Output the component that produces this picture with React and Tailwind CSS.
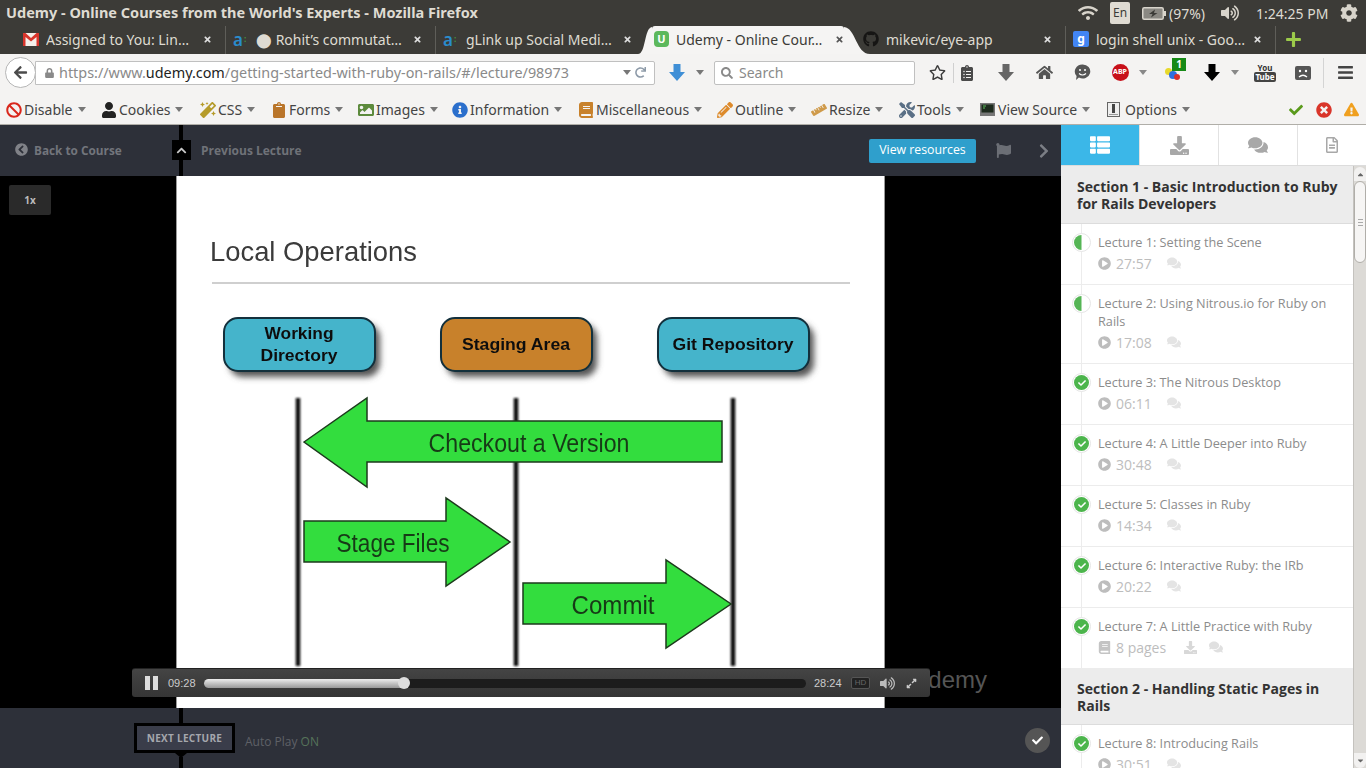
import React from "react";
import {
  FaThList, FaDownload, FaComments, FaRegFileAlt, FaPlayCircle, FaBook, FaFlag, FaChevronRight, FaChevronUp,
  FaChevronCircleLeft, FaGithub, FaVolumeUp, FaExpandAlt, FaCheck, FaWifi, FaCog, FaSearch, FaLock, FaArrowLeft,
  FaRedo, FaHome, FaBars, FaRegStar, FaPencilAlt, FaRuler, FaTools, FaInfoCircle, FaBan, FaUser, FaMagic,
  FaClipboard, FaImage, FaTimesCircle, FaExclamationTriangle, FaTimes, FaPlus, FaClipboardList, FaCaretDown, FaCaretUp
} from "react-icons/fa";

const Caret = ({ c = "text-[#777]" }) => <span className={`inline-block w-0 h-0 border-l-[4px] border-r-[4px] border-t-[5px] border-l-transparent border-r-transparent border-t-current ${c}`} />;

const BlockArrow = ({ fill, w = 16, h = 17 }) => (
  <svg width={w} height={h} viewBox="0 0 16 17"><path d="M4.5 0h7v8H16l-8 9-8-9h4.5z" fill={fill} /></svg>
);

function Tab({ icon, text, active, sep = true }) {
  if (active) {
    return (
      <div className="w-[226px] -ml-[8px] -mr-[8px] h-full flex items-stretch">
        <svg width="14" height="28" viewBox="0 0 14 28" className="shrink-0"><path d="M0 28C8 28 6 2 14 1V28Z" fill="#f5f4f3" /></svg>
        <div className="flex-1 bg-[#f5f4f3] rounded-t-[3px] flex items-center pl-[2px] pb-[2px] text-[#3c3b37]">
          <span className="w-[22px] shrink-0 flex">{icon}</span>
          <span className="w-[158px] whitespace-nowrap overflow-hidden">{text}</span>
          <FaTimes className="text-[9px] text-[#555] ml-[1px]" />
        </div>
        <svg width="26" height="28" viewBox="0 0 26 28" className="shrink-0"><path d="M0 1C12 2 12 28 26 28H0Z" fill="#f5f4f3" /></svg>
      </div>
    );
  }
  return (
    <div className={`w-[210px] h-full flex items-center pl-[7px] pb-[2px] text-[#dfdbd2] ${sep ? "border-r border-[#5f5e59]" : ""}`}>
      <span className="w-[23px] shrink-0 flex justify-start">{icon}</span>
      <span className="w-[156px] whitespace-nowrap overflow-hidden">{text}</span>
      <FaTimes className="text-[9px] text-[#ddd] shrink-0 ml-[1px]" />
    </div>
  );
}

const AIcon = () => (
  <span className="flex items-center font-['Noto_Sans'] text-[17px] leading-none text-[#2a8ccc] font-semibold">a<span className="text-[8px] text-[#48a23f] ml-[1px]">:</span></span>
);

function DevItem({ w, icon, label }) {
  return (
    <div style={{ width: w }} className="flex items-center shrink-0">
      <span className="w-[18px] shrink-0 flex justify-start text-[16px]">{icon}</span>
      <span className="whitespace-nowrap">{label}</span>
      <span className="ml-[5px] flex"><Caret /></span>
    </div>
  );
}

function Row({ title, meta, kind = "done", extra, border = true }) {
  return (
    <div className={`flex ${border ? "border-b border-[#ececec]" : ""}`}>
      <div className="w-[21px] shrink-0 border-r border-[#ececec]">
        <div className="ml-[11px] mt-[9px] w-[19px] h-[19px] rounded-full bg-white border border-[#e6e6e6] flex items-center justify-center">
          {kind === "half" ? (
            <svg width="15" height="15" viewBox="0 0 15 15"><path d="M7.5 0A7.5 7.5 0 0 0 7.5 15Z" fill="#55b555" /></svg>
          ) : (
            <span className="w-[15px] h-[15px] rounded-full bg-[#4cb54c] flex items-center justify-center"><FaCheck className="text-[8px] text-white" /></span>
          )}
        </div>
      </div>
      <div className="pl-[16px] pt-[9px] pb-[11px] flex-1 min-w-0">
        <div className="text-[12.7px] leading-[18px] text-[#8c8c8c] w-[240px]">{title}</div>
        <div className="mt-[2px] h-[20px] flex items-center text-[14px] text-[#bdbdbd]">
          {extra ? (
            <>
              <FaBook className="text-[13px] mr-[5px] text-[#c4c4c4]" />
              <span className="w-[68px]">{meta}</span>
              <FaDownload className="text-[13px] text-[#d8d8d8] mr-[12px]" />
              <FaComments className="text-[14px] text-[#e0e0e0]" />
            </>
          ) : (
            <>
              <FaPlayCircle className="text-[13px] mr-[5px] text-[#bdbdbd]" />
              <span className="w-[51px]">{meta}</span>
              <FaComments className="text-[14px] text-[#e4e4e4]" />
            </>
          )}
        </div>
      </div>
    </div>
  );
}

const Section = ({ children, tight }) => (
  <div className={`bg-[#ececec] border-b border-[#dcdcdc] pl-[16px] pr-[8px] text-[14px] leading-[17px] font-bold text-[#333] ${tight ? "pt-[11px] pb-[10px]" : "pt-[12px] pb-[11px]"}`}>{children}</div>
);

function Slide() {
  const box = "#45b4cb";
  return (
    <svg viewBox="176 176 709 532" width="709" height="532" className="block" fontFamily="'Liberation Sans', sans-serif">
      <defs>
        <filter id="b1" x="-20%" y="-20%" width="140%" height="140%"><feGaussianBlur stdDeviation="3" /></filter>
        <filter id="b2" x="-100%" y="-5%" width="300%" height="110%"><feGaussianBlur stdDeviation="1.1" /></filter>
        <filter id="b3" x="-5%" y="-5%" width="110%" height="110%"><feGaussianBlur stdDeviation="0.35" /></filter>
      </defs>
      <rect x="176" y="176" width="709" height="532" fill="#fff" />
      <rect x="176" y="176" width="1" height="532" fill="#999" />
      <rect x="884" y="176" width="1" height="532" fill="#999" />
      <text x="210" y="261" fontSize="28" fill="#3a3a3a" textLength="207" lengthAdjust="spacingAndGlyphs" filter="url(#b3)">Local Operations</text>
      <rect x="212" y="282" width="638" height="2" fill="#cfcfcf" />
      {[[224, box], [441, "#c8812b"], [658, box]].map(([x, f]) => (
        <g key={x}>
          <rect x={x + 5} y="324" width="151" height="53" rx="14" fill="#555" filter="url(#b1)" />
          <rect x={x} y="318" width="151" height="53" rx="14" fill={f} stroke="#13303c" strokeWidth="2" />
        </g>
      ))}
      <g fontWeight="700" fontSize="17" fill="#111" textAnchor="middle" filter="url(#b3)">
        <text x="299" y="339" textLength="69" lengthAdjust="spacingAndGlyphs">Working</text>
        <text x="299" y="361" textLength="77" lengthAdjust="spacingAndGlyphs">Directory</text>
        <text x="516" y="350" textLength="108" lengthAdjust="spacingAndGlyphs">Staging Area</text>
        <text x="733" y="350" textLength="121" lengthAdjust="spacingAndGlyphs">Git Repository</text>
      </g>
      <g stroke="#111" strokeWidth="4.5" filter="url(#b2)">
        <line x1="298" y1="398" x2="298" y2="666" />
        <line x1="516" y1="398" x2="516" y2="666" />
        <line x1="733" y1="398" x2="733" y2="666" />
      </g>
      <g fill="#33dd3e" stroke="#1c3a1c" strokeWidth="1.5">
        <polygon points="304,442 367,398 367,421 722,421 722,462 367,462 367,487" />
        <polygon points="304,521 446,521 446,498 510,542 446,586 446,562 304,562" />
        <polygon points="523,583 666,583 666,560 731,604 666,648 666,624 523,624" />
      </g>
      <g fontSize="25" fill="#173a17" textAnchor="middle" filter="url(#b3)">
        <text x="529" y="452" textLength="201" lengthAdjust="spacingAndGlyphs">Checkout a Version</text>
        <text x="393" y="552" textLength="113" lengthAdjust="spacingAndGlyphs">Stage Files</text>
        <text x="613" y="614" textLength="83" lengthAdjust="spacingAndGlyphs">Commit</text>
      </g>
    </svg>
  );
}

export default function App() {
  return (
    <div className="w-[1366px] h-[768px] overflow-hidden flex flex-col font-['Noto_Sans',sans-serif]">
      {/* title bar */}
      <div className="h-[26px] bg-[#3c3b37] flex items-center pl-[6px] text-[#dfdbd2] shrink-0">
        <span className="text-[14.5px] font-bold whitespace-nowrap w-[1072px]">Udemy - Online Courses from the World's Experts - Mozilla Firefox</span>
        <FaWifi className="text-[16px] w-[20px] text-[#d8d4cb]" />
        <span className="ml-[12px] w-[20px] h-[22px] bg-[#dfdbd2] text-[#3c3b37] rounded-[2px] text-[12px] flex items-center justify-center">En</span>
        <svg width="24" height="13" viewBox="0 0 24 13" className="ml-[12px]"><rect x="0.75" y="0.75" width="20.5" height="11.5" rx="1.5" fill="#8a8882" stroke="#d8d4cb" strokeWidth="1.5" /><rect x="22" y="4" width="2" height="5" fill="#d8d4cb" /><path d="M13 2.5L7 7h3.5L9 10.5 15.5 6H12Z" fill="#3c3b37" /></svg>
        <span className="ml-[3px] text-[14px] whitespace-nowrap">(97%)</span>
        <FaVolumeUp className="ml-[16px] text-[18px] text-[#d8d4cb]" />
        <span className="ml-[17px] text-[14px] whitespace-nowrap">1:24:25 PM</span>
        <FaCog className="ml-[12px] text-[18px] text-[#d8d4cb]" />
      </div>
      {/* tabs */}
      <div className="h-[28px] bg-[#3c3b37] flex items-stretch pl-[16px] text-[14px] shrink-0">
        <Tab text="Assigned to You: Lin…" icon={<svg width="16" height="13" viewBox="0 0 16 13"><rect width="16" height="13" fill="#f4f0ec" /><path d="M0 0H2.5L8 5L13.5 0H16V13H13.5V4L8 8.5L2.5 4V13H0Z" fill="#d8352c" /></svg>} />
        <Tab text={<>⬤ Rohit’s commutat…</>} icon={<AIcon />} />
        <Tab text="gLink up Social Medi…" sep={false} icon={<AIcon />} />
        <Tab active text="Udemy - Online Cour…" icon={<span className="w-[15px] h-[16px] rounded-[4px] bg-[#5cb85c] text-white text-[11px] font-bold flex items-center justify-center">U</span>} />
        <Tab sep text="mikevic/eye-app" icon={<FaGithub className="text-[16px] text-[#161514]" />} />
        <Tab text="login shell unix - Goo…" icon={<span className="w-[16px] h-[16px] bg-[#4285f4] rounded-[2px] text-white text-[12px] font-bold flex items-center justify-center">g</span>} />
        <div className="flex items-center pl-[9px] pb-[2px]"><FaPlus className="text-[17px] text-[#9ccb4a]" /></div>
      </div>
      {/* nav bar */}
      <div className="h-[36px] bg-[#f4f3f2] flex items-center pl-[5px] pt-[1px] shrink-0">
        <div className="w-[31px] h-[31px] rounded-full bg-white border border-[#b6b6b6] flex items-center justify-center shrink-0 z-10">
          <FaArrowLeft className="text-[15px] text-[#4c4c4c]" />
        </div>
        <div className="-ml-[1px] w-[620px] h-[24px] bg-white border border-[#c0c0c0] rounded-r-[2px] flex items-center pl-[8px] text-[14.4px] text-[#8a8a8a] shrink-0">
          <FaLock className="text-[10px] text-[#8a8a8a] w-[11px] mr-[4px]" />
          <span className="whitespace-nowrap w-[564px]">https://www.<span className="text-[#222]">udemy.com</span>/getting-started-with-ruby-on-rails/#/lecture/98973</span>
          <Caret />
          <FaRedo className="ml-[4px] text-[11px] text-[#8d9aa8]" />
        </div>
        <div className="w-[30px] flex justify-end shrink-0"><BlockArrow fill="#3f8fd6" /></div>
        <div className="w-[29px] flex justify-center shrink-0"><Caret /></div>
        <div className="w-[201px] h-[24px] bg-white border border-[#c0c0c0] rounded-[2px] flex items-center pl-[6px] text-[14px] text-[#8a8a8a] shrink-0">
          <FaSearch className="text-[12px] mr-[6px] text-[#8a8a8a]" />Search
        </div>
        <span className="ml-[8px] w-[28px] flex justify-center shrink-0"><FaRegStar className="text-[17px] text-[#3c3c3c]" /></span>
        <span className="w-[4px] flex justify-center shrink-0"><span className="w-px h-[20px] bg-[#d0d0d0]" /></span>
        <span className="w-[24px] flex justify-center shrink-0"><FaClipboardList className="text-[16px] text-[#4a4a4a]" /></span>
        <span className="w-[54px] flex justify-center shrink-0"><BlockArrow fill="#666" /></span>
        <span className="w-[22px] flex justify-center shrink-0"><FaHome className="text-[17px] text-[#555]" /></span>
        <span className="w-[54px] flex justify-center shrink-0">
          <svg width="17" height="17" viewBox="0 0 17 17"><path d="M8.5 0.5a7.5 7 0 1 1-3.6 13L2 16l.6-4A7.5 7 0 0 1 8.5.5Z" fill="#555" /><circle cx="6" cy="6" r="1" fill="#fff" /><circle cx="11" cy="6" r="1" fill="#fff" /><path d="M5 9.5q3.5 3 7 0" stroke="#fff" strokeWidth="1.2" fill="none" /></svg>
        </span>
        <span className="w-[22px] flex justify-center shrink-0">
          <span className="w-[17px] h-[17px] rounded-full bg-[#c8101a] text-white text-[7px] font-bold flex items-center justify-center">ABP</span>
        </span>
        <span className="w-[24px] flex justify-center shrink-0"><Caret c="text-[#888]" /></span>
        <span className="w-[38px] flex justify-center shrink-0">
          <span className="relative w-[20px] h-[20px]">
            <span className="absolute left-[1px] top-[5px] w-[7px] h-[7px] rounded-full bg-[#e8d92c]" />
            <span className="absolute left-[5px] top-[8px] w-[8px] h-[8px] rounded-full bg-[#2f6fe0]" />
            <span className="absolute left-[10px] top-[11px] w-[6px] h-[6px] rounded-full bg-[#d8302a]" />
            <span className="absolute left-[8px] -top-[5px] w-[14px] h-[13px] bg-[#178a17] text-white text-[10px] leading-[13px] font-bold text-center">1</span>
          </span>
        </span>
        <span className="w-[38px] flex justify-center shrink-0"><BlockArrow fill="#000" /></span>
        <span className="w-[8px] flex justify-center shrink-0"><Caret c="text-[#888]" /></span>
        <span className="w-[52px] flex flex-col items-center shrink-0 leading-none">
          <span className="text-[8px] font-bold text-[#333] leading-[9px]">You</span>
          <span className="text-[8px] font-bold text-white bg-[#444] rounded-[2px] px-[1px] leading-[10px]">Tube</span>
        </span>
        <span className="w-[24px] flex justify-center shrink-0">
          <svg width="16" height="14" viewBox="0 0 16 14"><rect width="16" height="14" rx="2" fill="#555" /><circle cx="5" cy="5" r="1.2" fill="#fff" /><circle cx="11" cy="5" r="1.2" fill="#fff" /><path d="M4 11q4-3.5 8 0" stroke="#fff" strokeWidth="1.3" fill="none" /></svg>
        </span>
        <span className="w-[16px] flex justify-center shrink-0"><span className="w-px h-[30px] bg-[#d4d4d4]" /></span>
        <span className="w-[28px] flex justify-center shrink-0"><FaBars className="text-[17px] text-[#444]" /></span>
      </div>
      {/* developer toolbar */}
      <div className="h-[35px] bg-[#f4f3f2] border-b border-[#b0aea8] flex items-center pl-[6px] pt-[5px] text-[14px] text-[#444] shrink-0">
        <DevItem w={95} label="Disable" icon={<FaBan className="text-[#d9271c]" />} />
        <DevItem w={99} label="Cookies" icon={<FaUser className="text-[#222]" />} />
        <DevItem w={71} label="CSS" icon={<FaMagic className="text-[#b59b2a]" />} />
        <DevItem w={87} label="Forms" icon={<FaClipboard className="text-[#b9752a]" />} />
        <DevItem w={94} label="Images" icon={<FaImage className="text-[#5c8a3c]" />} />
        <DevItem w={126} label="Information" icon={<FaInfoCircle className="text-[#2b6fcc]" />} />
        <DevItem w={139} label="Miscellaneous" icon={<FaBook className="text-[#c8812b]" />} />
        <DevItem w={94} label="Outline" icon={<FaPencilAlt className="text-[#dd8a2b]" />} />
        <DevItem w={88} label="Resize" icon={<FaRuler className="text-[#cf9a4a]" />} />
        <DevItem w={81} label="Tools" icon={<FaTools className="text-[#5a6f85]" />} />
        <DevItem w={127} label="View Source" icon={<svg width="15" height="13" viewBox="0 0 15 13"><rect width="15" height="13" fill="#777" /><rect x="1.5" y="1.5" width="12" height="8" fill="#1d2a1d" /><path d="M3 3h3M3 5h2" stroke="#5fc05f" /></svg>} />
        <DevItem w={181} label="Options" icon={<svg width="13" height="15" viewBox="0 0 13 15"><rect x="0.5" y="0.5" width="12" height="14" fill="#eee" stroke="#666" /><rect x="5" y="2" width="3" height="9" fill="#444" /><rect x="2" y="12" width="9" height="1" fill="#999" /></svg>} />
        <FaCheck className="text-[14px] text-[#5a9a1c] w-[16px]" />
        <FaTimesCircle className="ml-[12px] text-[16px] text-[#d9352a]" />
        <FaExclamationTriangle className="ml-[12px] text-[15px] text-[#f0a020]" />
      </div>
      {/* main */}
      <div className="flex-1 min-h-0 flex font-['Open_Sans',sans-serif]">
        {/* left */}
        <div className="w-[1061px] shrink-0 flex flex-col">
          <div className="h-[51px] bg-[#2d3039] flex items-center shrink-0">
            <FaChevronCircleLeft className="ml-[15px] text-[13px] text-[#808288] -translate-y-[1px]" />
            <span className="ml-[6px] w-[138px] text-[11.8px] leading-[16px] font-bold text-[#72757c] pb-[2px]">Back to Course</span>
            <div className="self-stretch w-[19px] flex flex-col items-center shrink-0">
              <span className="w-[4px] h-[15px] bg-black ml-[-1px]" />
              <span className="w-[19px] h-[20px] bg-black flex items-center justify-center"><FaChevronUp className="text-[11px] text-[#c8c8c8]" /></span>
              <span className="w-[4px] flex-1 bg-black ml-[-1px]" />
            </div>
            <span className="ml-[10px] text-[12px] font-bold text-[#6f7278] w-[668px]">Previous Lecture</span>
            <span className="w-[107px] h-[24px] rounded-[2px] bg-[#2f9fcc] text-white text-[12.3px] flex items-center justify-center">View resources</span>
            <FaFlag className="ml-[20px] text-[15px] text-[#6b6e75]" />
            <FaChevronRight className="ml-[25px] text-[16px] text-[#7b7e85]" />
          </div>
          <div className="flex-1 min-h-0 bg-black relative">
            <div className="ml-[176px] w-[709px] h-[532px]"><Slide /></div>
            <div className="absolute left-[9px] top-[9px] w-[42px] h-[30px] rounded-[2px] bg-[#2a2a2a] text-[10px] font-bold text-[#bbb] flex items-center justify-center">1x</div>
            <div className="absolute left-[911px] top-[486px] text-[24px] leading-[36px] text-[#555] font-['Liberation_Sans']">Udemy</div>
            <div className="absolute left-[132px] top-[492px] w-[798px] h-[29px] rounded-[3px] bg-gradient-to-b from-[#444] to-[#353535] border-t border-[#222] flex items-center text-[11px] text-[#ccc] font-['Liberation_Sans']">
              <span className="ml-[13px] flex gap-[3px]"><span className="w-[5px] h-[14px] bg-[#ddd]" /><span className="w-[5px] h-[14px] bg-[#ddd]" /></span>
              <span className="ml-[10px] w-[36px]">09:28</span>
              <div className="w-[602px] h-[9px] rounded-full bg-[#1c1c1c] flex items-center">
                <div className="w-[200px] h-[9px] rounded-l-full bg-gradient-to-b from-[#eee] to-[#999]" />
                <div className="w-[12px] h-[12px] rounded-full bg-[#ddd] -ml-[6px]" />
              </div>
              <span className="ml-[8px] w-[37px]">28:24</span>
              <span className="w-[19px] h-[12px] rounded-[2px] bg-[#222] border border-[#555] text-[8px] text-[#666] flex items-center justify-center">HD</span>
              <FaVolumeUp className="ml-[10px] text-[15px] text-[#bbb]" />
              <FaExpandAlt className="ml-[11px] text-[11px] text-[#ccc]" />
            </div>
          </div>
          <div className="h-[60px] bg-[#2d3039] flex items-start pl-[134px] shrink-0">
            <div className="w-[101px] h-full flex flex-col shrink-0">
              <span className="ml-[45px] w-[4px] h-[15px] bg-black" />
              <span className="h-[30px] bg-[#3a3d4a] border-[3px] border-black flex items-center justify-center text-[10px] font-bold tracking-[0.3px] text-[#a5a7ad]">NEXT LECTURE</span>
              <span className="ml-[41px] w-0 h-0 border-l-[6px] border-r-[6px] border-t-[5px] border-l-transparent border-r-transparent border-t-black" />
              <span className="ml-[45px] w-[4px] flex-1 -mt-[1px] bg-black" />
            </div>
            <span className="ml-[10px] mt-[25px] w-[780px] text-[12px] leading-[18px] text-[#5f6167]">Auto Play <span className="text-[#56735a]">ON</span></span>
            <span className="mt-[20px] w-[25px] h-[25px] rounded-full bg-[#555] flex items-center justify-center"><FaCheck className="text-[11px] text-white" /></span>
          </div>
        </div>
        {/* sidebar */}
        <div className="flex-1 min-w-0 flex flex-col bg-white">
          <div className="h-[41px] flex shrink-0 border-b border-[#dcdcdc] text-[#a8a8a8]">
            <span className="w-[78px] bg-[#3bb7e8] flex items-center justify-center"><FaThList className="text-[20px] text-white" /></span>
            <span className="w-[79px] border-l border-[#e2e2e2] flex items-center justify-center"><FaDownload className="text-[19px]" /></span>
            <span className="w-[79px] border-l border-[#e2e2e2] flex items-center justify-center"><FaComments className="text-[20px]" /></span>
            <span className="flex-1 border-l border-[#e2e2e2] flex items-center justify-center"><FaRegFileAlt className="text-[16px]" /></span>
          </div>
          <div className="flex-1 min-h-0 flex">
            <div className="flex-1 min-w-0 overflow-hidden">
              <Section>Section 1 - Basic Introduction to Ruby for Rails Developers</Section>
              <Row kind="half" title="Lecture 1: Setting the Scene" meta="27:57" />
              <Row kind="half" title="Lecture 2: Using Nitrous.io for Ruby on Rails" meta="17:08" />
              <Row title="Lecture 3: The Nitrous Desktop" meta="06:11" />
              <Row title="Lecture 4: A Little Deeper into Ruby" meta="30:48" />
              <Row title="Lecture 5: Classes in Ruby" meta="14:34" />
              <Row title="Lecture 6: Interactive Ruby: the IRb" meta="20:22" />
              <Row extra title="Lecture 7: A Little Practice with Ruby" meta="8 pages" />
              <Section tight>Section 2 - Handling Static Pages in Rails</Section>
              <Row title="Lecture 8: Introducing Rails" meta="30:51" />
            </div>
            <div className="w-[13px] shrink-0 bg-[#dcdad6] border-l border-[#c4c2be] flex flex-col items-center">
              <span className="h-[14px] w-full bg-[#f2f1f0] rounded-t-[6px] flex items-center justify-center mt-[1px]"><FaCaretUp className="text-[9px] text-[#666]" /></span>
              <span className="h-[82px] w-full bg-[#f6f5f4] border border-[#b0aea9] rounded-[6px] flex flex-col items-center justify-center gap-[2px]">
                <span className="w-[5px] h-px bg-[#aaa]" /><span className="w-[5px] h-px bg-[#aaa]" /><span className="w-[5px] h-px bg-[#aaa]" />
              </span>
              <span className="flex-1" />
              <span className="h-[15px] w-full bg-[#f2f1f0] rounded-b-[6px] flex items-center justify-center"><FaCaretDown className="text-[9px] text-[#666]" /></span>
            </div>
          </div>
        </div>
      </div>
    </div>
  );
}
